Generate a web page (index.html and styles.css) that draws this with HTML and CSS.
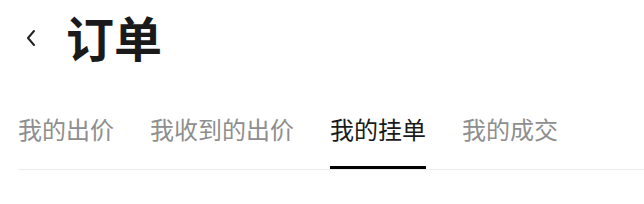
FILE: index.html
```html
<html>
<head>
    <meta charset="utf-8">
    <title>订单</title>
    <link rel="stylesheet" href="styles.css">
</head>
<body>
    <div class="app">
        <header class="header">
            <div class="back">
                <svg width="12" height="18" viewBox="0 0 12 18">
                    <polyline points="9,2 3,9 9,16" fill="none" stroke="#222" stroke-width="2" stroke-linecap="round" stroke-linejoin="round"/>
                </svg>
            </div>
            <h1 class="title">订单</h1>
        </header>
        <nav class="tabs">
            <div class="tab">我的出价</div>
            <div class="tab">我收到的出价</div>
            <div class="tab active">我的挂单</div>
            <div class="tab">我的成交</div>
        </nav>
    </div>
</body>
</html>
```

FILE: styles.css
```css
html, body {
    margin: 0;
    padding: 0;
    background: #fff;
    font-family: "Noto Sans CJK SC", "Noto Sans", sans-serif;
    color: #222;
}

.app {
    width: 644px;
}

.header {
    display: flex;
    align-items: center;
    height: 72px;
    padding-left: 25px;
}

.back {
    display: flex;
    width: 41px;
    margin-top: 4px;
}

.title {
    margin: 0;
    font-size: 48px;
    font-weight: bold;
    line-height: 1;
    color: #1a1a1a;
}

.tabs {
    display: flex;
    gap: 36px;
    margin-left: 18px;
    padding-top: 45px;
    border-bottom: 1px solid #ececec;
}

.tab {
    font-size: 24px;
    line-height: 24px;
    padding-bottom: 25px;
    border-bottom: 3px solid transparent;
    color: #8e8e8e;
}

.tab.active {
    color: #1a1a1a;
    border-bottom-color: #000;
}
```
